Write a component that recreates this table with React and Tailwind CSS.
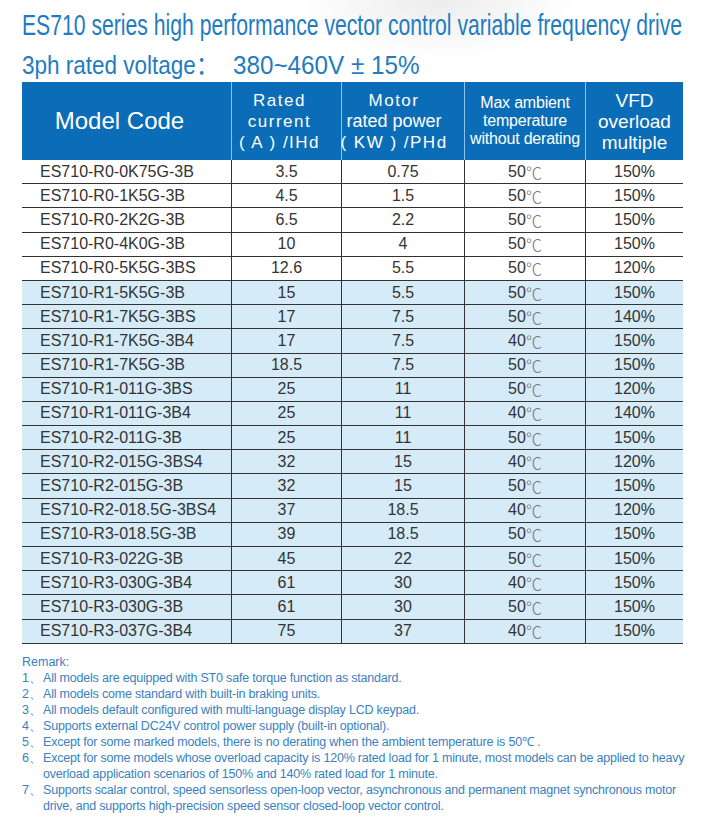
const rows = [
  ['ES710-R0-0K75G-3B', '3.5', '0.75', '50', '150%'],
  ['ES710-R0-1K5G-3B', '4.5', '1.5', '50', '150%'],
  ['ES710-R0-2K2G-3B', '6.5', '2.2', '50', '150%'],
  ['ES710-R0-4K0G-3B', '10', '4', '50', '150%'],
  ['ES710-R0-5K5G-3BS', '12.6', '5.5', '50', '120%'],
  ['ES710-R1-5K5G-3B', '15', '5.5', '50', '150%'],
  ['ES710-R1-7K5G-3BS', '17', '7.5', '50', '140%'],
  ['ES710-R1-7K5G-3B4', '17', '7.5', '40', '150%'],
  ['ES710-R1-7K5G-3B', '18.5', '7.5', '50', '150%'],
  ['ES710-R1-011G-3BS', '25', '11', '50', '120%'],
  ['ES710-R1-011G-3B4', '25', '11', '40', '140%'],
  ['ES710-R2-011G-3B', '25', '11', '50', '150%'],
  ['ES710-R2-015G-3BS4', '32', '15', '40', '120%'],
  ['ES710-R2-015G-3B', '32', '15', '50', '150%'],
  ['ES710-R2-018.5G-3BS4', '37', '18.5', '40', '120%'],
  ['ES710-R3-018.5G-3B', '39', '18.5', '50', '150%'],
  ['ES710-R3-022G-3B', '45', '22', '50', '150%'],
  ['ES710-R3-030G-3B4', '61', '30', '40', '150%'],
  ['ES710-R3-030G-3B', '61', '30', '50', '150%'],
  ['ES710-R3-037G-3B4', '75', '37', '40', '150%'],
];

const remarks = [
  ['1、', 'All models are equipped with ST0 safe torque function as standard.'],
  ['2、', 'All models come standard with built-in braking units.'],
  ['3、', 'All models default configured with multi-language display LCD keypad.'],
  ['4、', 'Supports external DC24V control power supply (built-in optional).'],
  ['5、', 'Except for some marked models, there is no derating when the ambient temperature is 50℃ .'],
  ['6、', 'Except for some models whose overload capacity is 120% rated load for 1 minute, most models can be applied to heavy', 'overload application scenarios of 150% and 140% rated load for 1 minute.'],
  ['7、', 'Supports scalar control, speed sensorless open-loop vector, asynchronous and permanent magnet synchronous motor', 'drive, and supports high-precision speed sensor closed-loop vector control.'],
];

const cols = 'grid grid-cols-[210px_110px_123px_121px_97px]';

export default function App() {
  return (
    <div className="min-h-[835px] w-[706px] overflow-hidden bg-white bg-[radial-gradient(ellipse_140px_60px_at_62%_0%,#ececec,transparent)] font-['Liberation_Sans',sans-serif] text-[#333]">
      <div className="px-[22px] pt-[11px]">
        <div className="h-[29px] w-[661px] whitespace-nowrap text-[29px] leading-[29px] text-[#1f7cc1]">
          <span className="inline-block origin-left scale-x-[0.73]">
            ES710 series high performance vector control variable frequency drive
          </span>
        </div>
        <div className="mt-[11px] flex h-[25px] w-[661px] items-baseline whitespace-nowrap text-[25px] leading-[25px] text-[#1f7cc1]">
          <div className="w-[211px] shrink-0">
            <span className="inline-block origin-left scale-x-[0.9]">
              3ph rated voltage<span className="font-['Noto_Sans_CJK_SC',sans-serif] leading-none">：</span>
            </span>
          </div>
          <div className="w-[200px] shrink-0">
            <span className="inline-block origin-left scale-x-[0.97]">380~460V ± 15%</span>
          </div>
        </div>

        <div className="mt-[6px] w-[661px]">
          <div className={`${cols} h-[78px] bg-[#0b6db8] text-white`}>
            <div className="flex items-center justify-center border-r border-[#8fc3ec] pr-[14px] text-[24px]">
              Model Code
            </div>
            <div className="flex flex-col items-center justify-center border-r border-[#8fc3ec] pr-[14px] text-[17px] leading-[21px] tracking-[1.5px]">
              <span>Rated</span>
              <span>current</span>
              <span className="whitespace-nowrap">( A ) /IHd</span>
            </div>
            <div className="flex flex-col items-center justify-center border-r border-[#8fc3ec] pr-[18px] text-[17px] leading-[21px]">
              <span className="tracking-[1.5px]">Motor</span>
              <span className="text-[18px]">rated power</span>
              <span className="whitespace-nowrap tracking-[1.5px]">( KW ) /PHd</span>
            </div>
            <div className="flex flex-col items-center justify-center border-r border-[#8fc3ec] text-[16px] leading-[18px] tracking-[-0.2px]">
              <span className="whitespace-nowrap">Max ambient</span>
              <span className="whitespace-nowrap">temperature</span>
              <span className="whitespace-nowrap">without derating</span>
            </div>
            <div className="flex flex-col items-center justify-center text-[19px] leading-[21px]">
              <span>VFD</span>
              <span>overload</span>
              <span>multiple</span>
            </div>
          </div>

          {rows.map((r, i) => (
            <div
              key={r[0] + i}
              className={`${cols} h-[24.2px] border-b border-[#333] text-[16px] leading-none ${i >= 5 ? 'bg-[#d5ebf8]' : 'bg-white'}`}
            >
              <div className="flex items-center border-r border-[#333] pl-[18px]">{r[0]}</div>
              <div className="flex items-center justify-center border-r border-[#333]">{r[1]}</div>
              <div className="flex items-center justify-center border-r border-[#333]">{r[2]}</div>
              <div className="flex items-center justify-center border-r border-[#333]">
                {r[3]}
                <span className="font-['Noto_Sans_CJK_SC',sans-serif] font-light text-[#777]">℃</span>
              </div>
              <div className="flex items-center justify-center">{r[4]}</div>
            </div>
          ))}
        </div>

        <div className="mt-[10px] text-[12.5px] leading-[16px] text-[#3a7fc0]">
          <div>Remark:</div>
          {remarks.map((m) => (
            <div key={m[0]} className="whitespace-nowrap">
              <div className="flex">
                <span className="w-[21px] shrink-0 overflow-hidden">{m[0]}</span>
                <span className="tracking-[-0.2px]">{m[1]}</span>
              </div>
              {m[2] && <div className="pl-[21px] tracking-[-0.2px]">{m[2]}</div>}
            </div>
          ))}
        </div>
      </div>
    </div>
  );
}
